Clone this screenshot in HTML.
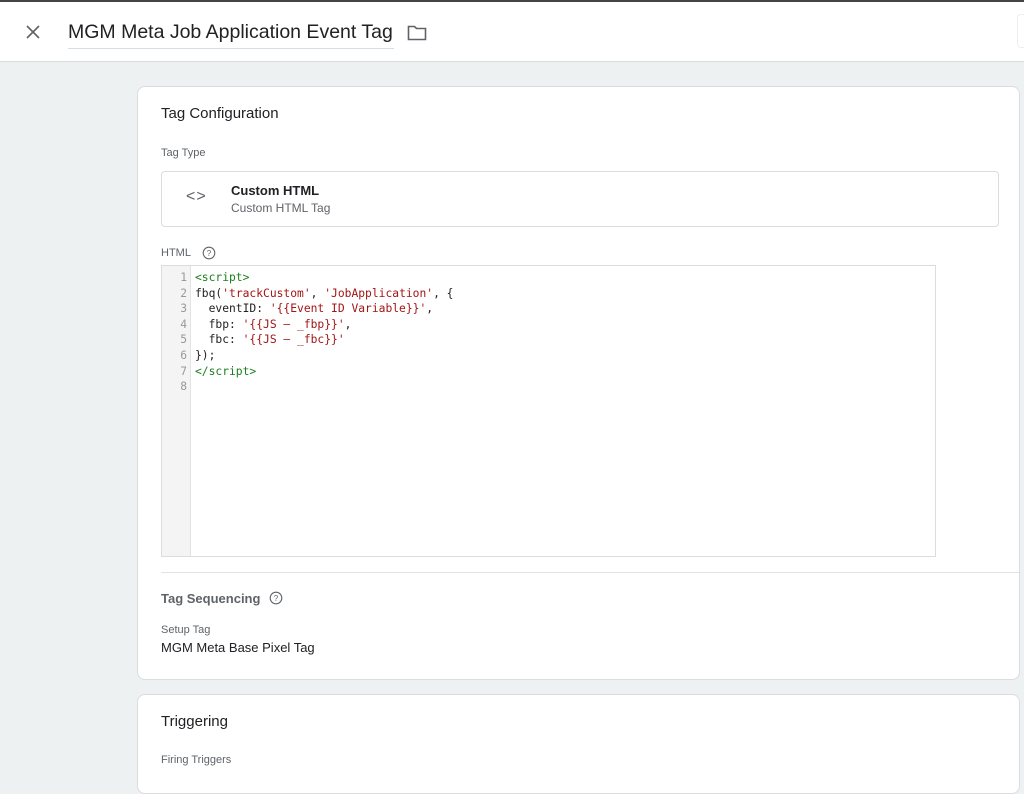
<!DOCTYPE html>
<html><head><meta charset="utf-8"><style>
*{box-sizing:border-box;margin:0;padding:0}
body{width:1024px;height:776px;overflow:hidden;background:#eef1f2;font-family:"Liberation Sans",sans-serif;color:#202124;position:relative}
.top{position:absolute;left:0;top:0;width:1024px;height:2px;background:#444}
.hdr{position:absolute;left:0;top:2px;width:1024px;height:60px;background:#fff;border-bottom:1px solid #dadce0}
.abs{position:absolute}
.card{position:absolute;left:137px;width:883px;background:#fff;border:1px solid #dadce0;border-radius:8px}
.lbl{font-size:11px;color:#5f6368}
.mono{font-family:"DejaVu Sans Mono","Liberation Mono",monospace;font-size:11.3px;line-height:15.6px;white-space:pre}
.g{color:#1a7f1a}.r{color:#a31515}
</style></head><body>
<div class="top"></div>
<div class="hdr">
 <svg class="abs" style="left:25px;top:22px" width="16" height="16" viewBox="0 0 16 16"><path d="M2 2L14 14M14 2L2 14" stroke="#5f6368" stroke-width="1.6"/></svg>
 <div class="abs" style="left:68px;top:19px;font-size:19.5px;color:#202124">MGM Meta Job Application Event Tag</div>
 <div class="abs" style="left:68px;top:46px;width:326px;height:1px;background:#dadce0"></div>
 <svg class="abs" style="left:407px;top:23px" width="20" height="16" viewBox="0 0 20 16"><path d="M1.5 1.5H7.5L9.5 3.5H18.5V14.5H1.5Z" fill="none" stroke="#5f6368" stroke-width="1.6"/></svg>
 <div class="abs" style="left:1017px;top:12px;width:10px;height:34px;border:1px solid #eee;border-radius:4px"></div>
</div>

<div class="card" style="top:86px;height:594px">
 <div class="abs" style="left:23px;top:18px;font-size:15px">Tag Configuration</div>
 <div class="abs lbl" style="left:23px;top:60px">Tag Type</div>
 <div class="abs" style="left:23px;top:84px;width:838px;height:56px;border:1px solid #dadce0;border-radius:4px">
  <div class="abs" style="left:24px;top:16px;font-size:16px;color:#5f6368;letter-spacing:1px">&lt;&gt;</div>
  <div class="abs" style="left:69px;top:11px;font-size:13px;font-weight:bold;color:#202124">Custom HTML</div>
  <div class="abs" style="left:69px;top:29px;font-size:12px;color:#5f6368">Custom HTML Tag</div>
 </div>
 <div class="abs lbl" style="left:23px;top:160px">HTML</div>
 <svg class="abs" style="left:64px;top:159px" width="14" height="14" viewBox="0 0 14 14"><circle cx="7" cy="7" r="5.8" fill="none" stroke="#5f6368" stroke-width="1.1"/><text x="7" y="10" font-size="8" text-anchor="middle" fill="#5f6368" font-family="Liberation Sans">?</text></svg>
 <div class="abs" style="left:23px;top:178px;width:775px;height:292px;border:1px solid #dadce0;background:#fff">
  <div class="abs" style="left:0;top:0;width:29px;height:290px;background:#f4f4f4;border-right:1px solid #e3e3e3"></div>
  <div class="abs mono" style="left:0;top:4px;width:25px;text-align:right;color:#999">1
2
3
4
5
6
7
8</div>
  <div class="abs mono" style="left:33px;top:4px;color:#222"><span class="g">&lt;script&gt;</span>
fbq(<span class="r">'trackCustom'</span>, <span class="r">'JobApplication'</span>, {
  eventID: <span class="r">'{{Event ID Variable}}'</span>,
  fbp: <span class="r">'{{JS – _fbp}}'</span>,
  fbc: <span class="r">'{{JS – _fbc}}'</span>
});
<span class="g">&lt;/script&gt;</span>
</div>
 </div>
 <div class="abs" style="left:23px;top:485px;width:860px;height:1px;background:#e3e3e3"></div>
 <div class="abs" style="left:23px;top:504px;font-size:13px;color:#5f6368;font-weight:bold">Tag Sequencing</div>
 <svg class="abs" style="left:131px;top:504px" width="14" height="14" viewBox="0 0 14 14"><circle cx="7" cy="7" r="5.8" fill="none" stroke="#5f6368" stroke-width="1.1"/><text x="7" y="10" font-size="8" text-anchor="middle" fill="#5f6368" font-family="Liberation Sans">?</text></svg>
 <div class="abs lbl" style="left:23px;top:537px">Setup Tag</div>
 <div class="abs" style="left:23px;top:553px;font-size:13px">MGM Meta Base Pixel Tag</div>
</div>

<div class="card" style="top:694px;height:100px">
 <div class="abs" style="left:23px;top:18px;font-size:15px">Triggering</div>
 <div class="abs lbl" style="left:23px;top:59px">Firing Triggers</div>
</div>
</body></html>
